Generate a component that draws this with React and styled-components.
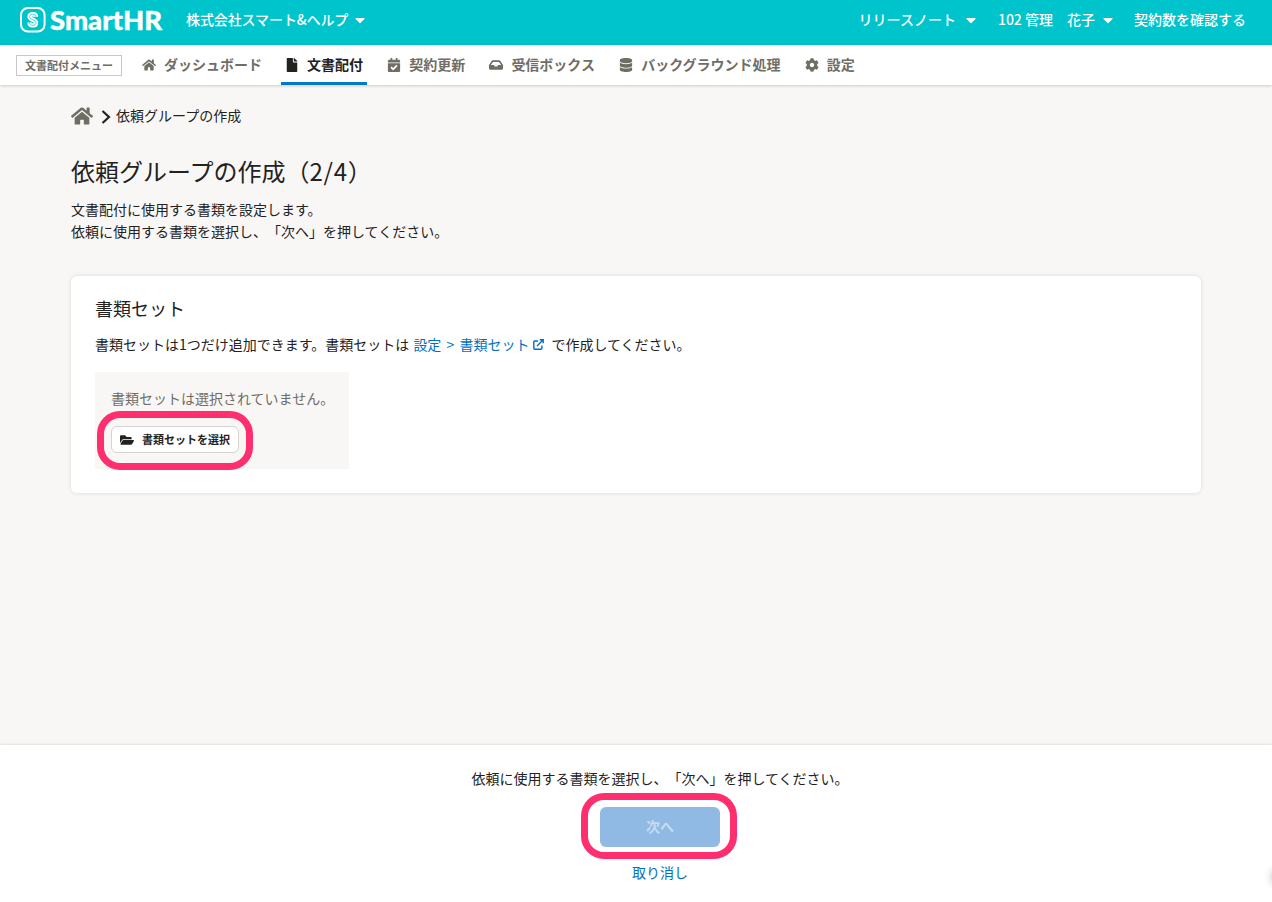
import React from "react";
import styled, { createGlobalStyle } from "styled-components";
import {
  FaHome,
  FaFile,
  FaCalendarCheck,
  FaInbox,
  FaDatabase,
  FaCog,
  FaCaretDown,
  FaFolderOpen,
} from "react-icons/fa";

const GlobalStyle = createGlobalStyle`
  * { box-sizing: border-box; }
  body {
    margin: 0;
    background: #f8f7f6;
    color: #23221e;
    font-family: "Noto Sans CJK JP", sans-serif;
    font-size: 14px;
    line-height: 22px;
    text-spacing-trim: space-all;
    overflow: hidden;
  }
  h1, h2, p { margin: 0; font-weight: 400; }
  button { font-family: inherit; }
  svg { display: block; flex: none; }
`;

const Page = styled.div`
  position: relative;
  display: flex;
  flex-direction: column;
  height: 902px;
  overflow: hidden;
`;

const Header = styled.header`
  display: flex;
  align-items: center;
  height: 45px;
  padding: 0 26px 6px 20px;
  background: #00c4cc;
  color: #fff;
`;

const HeaderItem = styled.a`
  display: flex;
  align-items: center;
  gap: ${(p) => p.$gap || 0}px;
  margin-left: ${(p) => p.$left};
  font-weight: 500;
  letter-spacing: ${(p) => p.$tracking || "normal"};
  white-space: nowrap;
`;

const Label = styled.span`
  padding-bottom: 2px;
`;

const Nav = styled.nav`
  position: relative;
  display: flex;
  align-items: center;
  height: 40px;
  padding-left: 16px;
  background: #fff;
  box-shadow: 0 1px 3px rgba(0, 0, 0, 0.18);
`;

const MenuTag = styled.span`
  width: 106px;
  height: 21px;
  margin-right: 16px;
  border: 1px solid #c8c7c5;
  color: #706d65;
  font-size: 11px;
  font-weight: 700;
  line-height: 19px;
  text-align: center;
`;

const NavItem = styled.a`
  display: flex;
  align-items: center;
  gap: 8px;
  height: 40px;
  margin-right: 16.2px;
  padding: 3px 4px 0;
  border-bottom: 3px solid ${(p) => (p.$active ? "#0077c7" : "transparent")};
  color: ${(p) => (p.$active ? "#23221e" : "#706d65")};
  font-weight: 700;
  white-space: nowrap;
  &:first-of-type { margin-right: 15px; }
`;

const Main = styled.main`
  flex: 1;
  padding: 20px 71px 0;
`;

const Breadcrumb = styled.div`
  display: flex;
  align-items: center;
  height: 22px;
  svg:first-child { color: #706d65; }
`;

const Title = styled.h1`
  margin-top: 26px;
  font-size: 24px;
  line-height: 36px;
`;

const StepCount = styled.span`
  letter-spacing: 0.7px;
`;

const Lead = styled.p`
  margin-top: 9px;
`;

const Card = styled.section`
  height: 217px;
  margin-top: 34px;
  padding: 19px 24px 24px;
  border-radius: 6px;
  background: #fff;
  box-shadow: 0 0 4px rgba(0, 0, 0, 0.13);
`;

const CardTitle = styled.h2`
  font-size: 18px;
  line-height: 26px;
`;

const CardText = styled.p`
  display: flex;
  align-items: center;
  margin-top: 12px;
`;

const Link = styled.a`
  display: inline-flex;
  align-items: center;
  gap: 4px;
  margin: 0 7px 0 4px;
  color: #0071c1;
  word-spacing: 2px;
`;

const EmptyBox = styled.div`
  width: 254px;
  height: 97px;
  margin-top: 17px;
  padding: 15px 16px 16px;
  background: #f8f7f6;
  color: #706d65;
  white-space: nowrap;
`;

const SelectButton = styled.button`
  display: flex;
  align-items: center;
  gap: 8px;
  width: 128px;
  height: 27px;
  margin-top: 17px;
  padding: 0 8px;
  border: 1px solid #d6d3d0;
  border-radius: 6px;
  background: #fff;
  color: #23221e;
  font-size: 11px;
  font-weight: 700;
  white-space: nowrap;
`;

const Anchor = styled.div`
  position: relative;
  width: max-content;
`;

const Ring = styled.span`
  position: absolute;
  top: ${(p) => p.$top}px;
  left: ${(p) => p.$left}px;
  width: 156px;
  height: ${(p) => p.$height}px;
  border: 7px solid #ff2e6e;
  border-radius: 23px;
  pointer-events: none;
`;

const Footer = styled.footer`
  display: flex;
  flex-direction: column;
  align-items: center;
  height: 157px;
  padding: 22px 0 0 48px;
  background: #fff;
  box-shadow: 0 0 3px rgba(0, 0, 0, 0.17);
`;

const NextButton = styled.button`
  display: block;
  width: 120px;
  height: 40px;
  margin: 18px 0 14px;
  padding: 0 0 2px;
  border: 0;
  border-radius: 6px;
  background: #90bae4;
  color: #c7dcf1;
  font-size: 14px;
  font-weight: 700;
`;

const CancelLink = styled.a`
  color: #0071c1;
`;

const EdgeHandle = styled.span`
  position: absolute;
  right: -13px;
  top: 871px;
  width: 12px;
  height: 12px;
  border-radius: 6px;
  box-shadow: 0 0 9px 1px rgba(0, 0, 0, 0.3);
`;

const LogoSvg = styled.svg`
  overflow: visible;
`;

const Logo = () => (
  <LogoSvg width="146" height="39" viewBox="0 0 146 39" aria-label="SmartHR">
    <rect x="1" y="8" width="23.6" height="23.6" rx="7" fill="none" stroke="#fff" strokeWidth="2" />
    <path
      d="M16 17.1C16 15 14.5 14.2 12.8 14.2C10.9 14.2 9.6 15.2 9.6 16.8C9.6 20 16 19.4 16 22.7C16 24.4 14.7 25.4 12.8 25.4C10.9 25.4 9.6 24.5 9.6 22.5"
      fill="none"
      stroke="#fff"
      strokeWidth="4.4"
    />
    <path
      d="M16.2 17.1C16 15 14.5 14.2 12.8 14.2C10.9 14.2 9.6 15.2 9.6 16.8C9.6 20 16 19.4 16 22.7C16 24.4 14.7 25.4 12.8 25.4C10.9 25.4 9.6 24.5 9.4 22.5"
      fill="none"
      stroke="#00c4cc"
      strokeWidth="0.7"
    />
    <text
      x="30"
      y="29.6"
      fill="#fff"
      stroke="#fff"
      strokeWidth="0.4"
      fontFamily="Lato, sans-serif"
      fontWeight="900"
      fontSize="27"
      textLength="112"
      lengthAdjust="spacingAndGlyphs"
    >
      SmartHR
    </text>
  </LogoSvg>
);

const Chevron = () => (
  <svg width="10" height="14" viewBox="0 0 10 14">
    <path d="M1.5 1L8 7L1.5 13" fill="none" stroke="#23221e" strokeWidth="2.2" />
  </svg>
);

const ExternalIcon = () => (
  <svg width="11" height="11" viewBox="0 0 11 11" fill="none" stroke="currentColor" strokeWidth="1.4">
    <path d="M5 2H1.7Q.8 2 .8 2.9V9.3Q.8 10.2 1.7 10.2H8Q8.9 10.2 8.9 9.3V6.5M6.7 .8H10.2V4.3M10 1L4 7" />
  </svg>
);

const ChevronSlot = styled.span`
  margin: 1px 5px 0 8px;
`;

const navItems = [
  { label: "ダッシュボード", Icon: FaHome },
  { label: "文書配付", Icon: FaFile, active: true },
  { label: "契約更新", Icon: FaCalendarCheck },
  { label: "受信ボックス", Icon: FaInbox },
  { label: "バックグラウンド処理", Icon: FaDatabase },
  { label: "設定", Icon: FaCog },
];

export default function App() {
  return (
    <Page>
      <GlobalStyle />
      <Header>
        <Logo />
        <HeaderItem $left="20px" $gap={4} $tracking="-0.1px">
          <Label>株式会社スマート&amp;ヘルプ</Label>
          <FaCaretDown size={16} />
        </HeaderItem>
        <HeaderItem $left="auto" $gap={7}>
          <Label>リリースノート</Label>
          <FaCaretDown size={16} />
        </HeaderItem>
        <HeaderItem $left="19px" $gap={5}>
          <Label>102 管理　花子</Label>
          <FaCaretDown size={16} />
        </HeaderItem>
        <HeaderItem $left="18px">
          <Label>契約数を確認する</Label>
        </HeaderItem>
      </Header>
      <Nav>
        <MenuTag>文書配付メニュー</MenuTag>
        {navItems.map(({ label, Icon, active }) => (
          <NavItem key={label} $active={active}>
            <Icon size={14} />
            <Label>{label}</Label>
          </NavItem>
        ))}
      </Nav>
      <Main>
        <Breadcrumb>
          <FaHome size={22} />
          <ChevronSlot>
            <Chevron />
          </ChevronSlot>
          <Label>依頼グループの作成</Label>
        </Breadcrumb>
        <Title>
          依頼グループの作成（<StepCount>2/4</StepCount>）
        </Title>
        <Lead>
          文書配付に使用する書類を設定します。
          <br />
          依頼に使用する書類を選択し、「次へ」を押してください。
        </Lead>
        <Card>
          <CardTitle>書類セット</CardTitle>
          <CardText>
            書類セットは1つだけ追加できます。書類セットは
            <Link>
              設定 &gt; 書類セット
              <ExternalIcon />
            </Link>
            で作成してください。
          </CardText>
          <EmptyBox>
            <p>書類セットは選択されていません。</p>
            <Anchor>
              <SelectButton>
                <FaFolderOpen size={14} />
                <Label>書類セットを選択</Label>
              </SelectButton>
              <Ring $top={-15} $left={-14} $height={59} />
            </Anchor>
          </EmptyBox>
        </Card>
      </Main>
      <Footer>
        <p>依頼に使用する書類を選択し、「次へ」を押してください。</p>
        <Anchor>
          <NextButton disabled>次へ</NextButton>
          <Ring $top={4} $left={-19} $height={66} />
        </Anchor>
        <CancelLink>取り消し</CancelLink>
      </Footer>
      <EdgeHandle />
    </Page>
  );
}
